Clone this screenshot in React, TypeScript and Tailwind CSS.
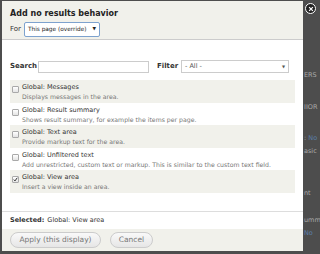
import React from "react";

const FONT = { fontFamily: '"DejaVu Sans", Verdana, sans-serif' };

const items = [
  { title: "Global: Messages", desc: "Displays messages in the area.", checked: false },
  { title: "Global: Result summary", desc: "Shows result summary, for example the items per page.", checked: false },
  { title: "Global: Text area", desc: "Provide markup text for the area.", checked: false },
  {
    title: "Global: Unfiltered text",
    desc: "Add unrestricted, custom text or markup. This is similar to the custom text field.",
    checked: false,
  },
  { title: "Global: View area", desc: "Insert a view inside an area.", checked: true },
];

function Checkbox({ checked }: { checked: boolean }) {
  return (
    <span className="mt-[3px] flex h-[7px] w-[7px] shrink-0 items-center justify-center rounded-[1px] border border-[#a9a9a9] bg-gradient-to-b from-white to-[#e4e4e4]">
      {checked && (
        <svg viewBox="0 0 8 8" className="h-[7px] w-[7px]">
          <path d="M1.2 4.2 L3.2 6.2 L6.8 1.2" fill="none" stroke="#222" strokeWidth="1.5" />
        </svg>
      )}
    </span>
  );
}

export default function App() {
  return (
    <div className="relative h-[254px] w-[320px] overflow-hidden bg-[#4d4d4d] text-[#333]" style={FONT}>
      {/* page behind the overlay */}
      <div className="ml-[304px] flex flex-col pt-[71px] text-[6.5px] leading-[8px] text-[#a8a8a8]">
        <span>ERS</span>
        <span className="mt-[24px]">IIOR</span>
        <span className="mt-[23px] whitespace-nowrap">
          : <span className="text-[#5b7fa8]">No</span>
        </span>
        <span className="mt-[5px]">asic</span>
        <span className="mt-[34px]">nt</span>
        <span className="mt-[19px]">umm</span>
        <span className="mt-[5px] text-[#5b7fa8]">No</span>
      </div>

      {/* dialog */}
      <div className="absolute left-[2px] top-[1px] flex h-[250px] w-[301px] flex-col rounded-tr-[3px] bg-white">
        <div className="flex h-[39px] flex-col border-b border-[#ccc] bg-[#f1f1eb] px-[8px] pt-[7px]">
          <div className="text-[8px] font-bold leading-[11px] text-[#222]">Add no results behavior</div>
          <div className="mt-[3px] flex items-center gap-[3px]">
            <span className="text-[7px]">For</span>
            <span className="flex h-[15px] w-[76px] items-center justify-between whitespace-nowrap rounded-[2px] border border-[#7da2ce] bg-white pl-[3px] pr-[3px] text-[5.8px] text-[#222]">
              This page (override)
              <span className="text-[4.5px]">▼</span>
            </span>
          </div>
        </div>

        <div className="flex flex-1 flex-col px-[8px] pt-[20px]">
          <div className="flex items-center">
            <span className="w-[28px] text-[7px] font-bold">Search</span>
            <span className="h-[12px] w-[111px] border border-[#ccc] bg-white" />
            <span className="ml-[8px] w-[24px] text-[7px] font-bold">Filter</span>
            <span className="flex h-[13px] w-[108px] items-center justify-between border border-[#ccc] bg-white px-[3px] text-[6.5px] text-[#555]">
              - All -
              <span className="text-[4px]">▼</span>
            </span>
          </div>

          <div className="mt-[7px] flex flex-col">
            {items.map((it, i) => (
              <div
                key={it.title}
                className={`flex h-[22.6px] gap-[3px] pl-[2px] pt-[3px] ${i % 2 === 0 ? "bg-[#f1f1eb]" : "bg-white"}`}
              >
                <Checkbox checked={it.checked} />
                <div className="flex flex-col">
                  <span className="text-[6.5px] leading-[9px] text-[#333]">{it.title}</span>
                  <span className="whitespace-nowrap text-[6.2px] leading-[9px] text-[#777]">{it.desc}</span>
                </div>
              </div>
            ))}
          </div>
        </div>

        <div className="flex h-[18px] items-center border-t border-[#ddd] px-[8px] text-[6.5px]">
          <span className="font-bold">Selected:</span>
          <span className="ml-[3px]">Global: View area</span>
        </div>
        <div className="flex h-[22px] items-center gap-[9px] bg-[#f1f1eb] px-[8px]">
          <span className="flex h-[16px] w-[91px] items-center justify-center rounded-full border border-[#ccc] bg-gradient-to-b from-[#f9f9f9] to-[#e6e6e6] text-[7.5px] text-[#777]">
            Apply (this display)
          </span>
          <span className="flex h-[16px] w-[43px] items-center justify-center rounded-full border border-[#ccc] bg-gradient-to-b from-[#f9f9f9] to-[#e6e6e6] text-[7.5px] text-[#777]">
            Cancel
          </span>
        </div>
      </div>

      {/* close button */}
      <span className="absolute left-[305px] top-[3px] flex h-[11px] w-[11px] items-center justify-center rounded-full border border-white bg-[#222]">
        <svg viewBox="0 0 8 8" className="h-[6px] w-[6px]">
          <path d="M1.5 1.5 L6.5 6.5 M6.5 1.5 L1.5 6.5" stroke="white" strokeWidth="1.6" />
        </svg>
      </span>
    </div>
  );
}
